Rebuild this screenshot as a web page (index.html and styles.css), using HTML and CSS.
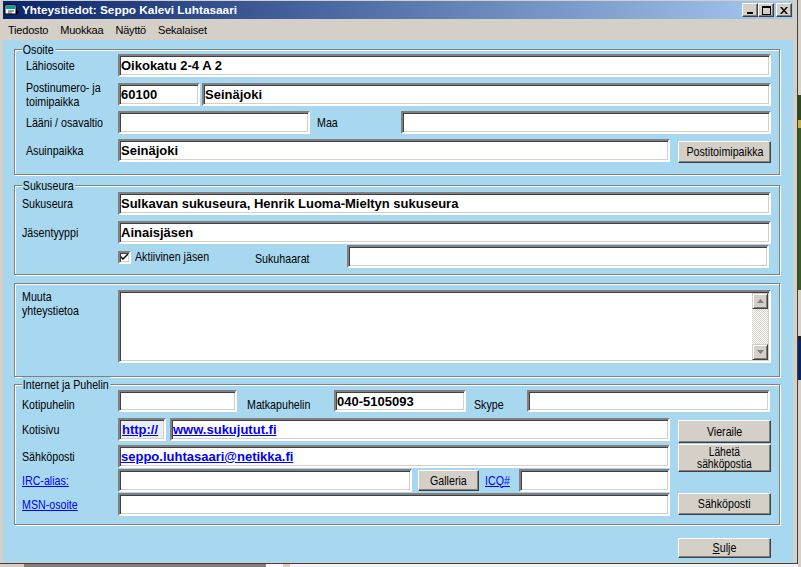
FILE: index.html
```html
<!DOCTYPE html>
<html lang="fi">
<head>
<meta charset="utf-8">
<title>Yhteystiedot</title>
<link rel="stylesheet" href="styles.css">
</head>
<body>
<div class="window">
  <div class="titlebar">
    <svg class="appicon" width="16" height="14" viewBox="0 0 16 14">
      <rect x="1" y="2" width="11" height="9" fill="#fff" stroke="#000" stroke-width="1"/>
      <rect x="2" y="3" width="9" height="3" fill="#00a0a0"/>
      <path d="M4 8h6M4 10h4" stroke="#404040" stroke-width="1"/>
      <path d="M12 6l3 3-3 3z" fill="#000"/>
    </svg>
    <span class="title">Yhteystiedot: Seppo Kalevi Luhtasaari</span>
    <div class="capbtns">
      <span class="cbtn"><svg width="8" height="7" viewBox="0 0 8 7"><rect x="1" y="5" width="6" height="2" fill="#000"/></svg></span>
      <span class="cbtn"><svg width="9" height="9" viewBox="0 0 9 9"><path d="M0 0h9v9H0z M1 2v6h7V2z" fill="#000" fill-rule="evenodd"/></svg></span>
      <span class="cbtn close"><svg width="8" height="7" viewBox="0 0 8 7"><path d="M0 0h2l2 2.5L6 0h2L5 3.5 8 7H6L4 4.5 2 7H0l3-3.5z" fill="#000"/></svg></span>
    </div>
  </div>
  <div class="menubar">
    <span class="menu">Tiedosto</span>
    <span class="menu">Muokkaa</span>
    <span class="menu">Näyttö</span>
    <span class="menu">Sekalaiset</span>
  </div>
  <div class="client">
    <div class="group g-osoite">
      <span class="legend">Osoite</span>
      <div class="row">
        <span class="lbl ind"><span class="nt">Lähiosoite</span></span>
        <div class="fld w653">Oikokatu 2-4 A 2</div>
      </div>
      <div class="row mt6">
        <span class="lbl ind"><span class="nt">Postinumero- ja<br>toimipaikka</span></span>
        <div class="fld w82">60100</div>
        <div class="fld w569 ml2">Seinäjoki</div>
      </div>
      <div class="row mt5">
        <span class="lbl ind"><span class="nt">Lääni / osavaltio</span></span>
        <div class="fld w192"></div>
        <span class="lbl2 maa"><span class="nt">Maa</span></span>
        <div class="fld w370"></div>
      </div>
      <div class="row mt5">
        <span class="lbl ind"><span class="nt">Asuinpaikka</span></span>
        <div class="fld w552">Seinäjoki</div>
        <span class="btn side h22 nudge2"><span class="nt">Postitoimipaikka</span></span>
      </div>
    </div>

    <div class="group g-suku">
      <span class="legend">Sukuseura</span>
      <div class="row">
        <span class="lbl"><span class="nt">Sukuseura</span></span>
        <div class="fld w653">Sulkavan sukuseura, Henrik Luoma-Mieltyn sukuseura</div>
      </div>
      <div class="row mt6">
        <span class="lbl"><span class="nt">Jäsentyyppi</span></span>
        <div class="fld w653">Ainaisjäsen</div>
      </div>
      <div class="row mt1">
        <span class="lbl"></span>
        <span class="chkwrap">
          <span class="chk"><svg width="7" height="7" viewBox="0 0 7 7"><path d="M0 2l2 2 5-5v2L2 6 0 4z" fill="#000"/></svg></span>
          <span class="chklbl"><span class="nt">Aktiivinen jäsen</span></span>
        </span>
        <span class="lbl2 sukuhaarat"><span class="nt">Sukuhaarat</span></span>
        <div class="fld w422"></div>
      </div>
    </div>

    <div class="group g-muuta">
      <div class="row top">
        <span class="lbl"><span class="nt">Muuta<br>yhteystietoa</span></span>
        <div class="memo">
          <div class="memo-text"></div>
          <div class="vscroll">
            <span class="sbtn"><svg width="7" height="4" viewBox="0 0 7 4"><path d="M3.5 0L7 4H0z" fill="#808080"/></svg></span>
            <span class="track"></span>
            <span class="sbtn"><svg width="7" height="4" viewBox="0 0 7 4"><path d="M0 0h7L3.5 4z" fill="#808080"/></svg></span>
          </div>
        </div>
      </div>
    </div>

    <div class="group g-inet">
      <span class="legend">Internet ja Puhelin</span>
      <div class="row h22">
        <span class="lbl low"><span class="nt">Kotipuhelin</span></span>
        <div class="fld h22 w119"></div>
        <span class="lbl2 low matka"><span class="nt">Matkapuhelin</span></span>
        <div class="fld h22 w132">040-5105093</div>
        <span class="lbl2 low skype"><span class="nt">Skype</span></span>
        <div class="fld h22 w243"></div>
      </div>
      <div class="inet-body">
        <div class="inet-left">
          <div class="row">
            <span class="lbl"><span class="nt">Kotisivu</span></span>
            <div class="fld proto w48"><a class="lnk" href="#">http://</a></div>
            <div class="fld w500 ml4"><a class="lnk" href="#">www.sukujutut.fi</a></div>
          </div>
          <div class="row mt4">
            <span class="lbl"><span class="nt">Sähköposti</span></span>
            <div class="fld w552"><a class="lnk" href="#">seppo.luhtasaari@netikka.fi</a></div>
          </div>
          <div class="row mt1">
            <a class="lbl lbl-link" href="#"><span class="nt">IRC-alias:</span></a>
            <div class="fld w294"></div>
            <span class="btn galleria"><span class="nt">Galleria</span></span>
            <a class="icq lbl-link" href="#"><span class="nt">ICQ#</span></a>
            <div class="fld w151"></div>
          </div>
          <div class="row mt1">
            <a class="lbl lbl-link" href="#"><span class="nt">MSN-osoite</span></a>
            <div class="fld w552"></div>
          </div>
        </div>
        <div class="inet-right">
          <span class="btn vieraile"><span class="nt">Vieraile</span></span>
          <span class="btn laheta"><span class="nt">Lähetä<br>sähköpostia</span></span>
          <span class="btn sposti"><span class="nt">Sähköposti</span></span>
        </div>
      </div>
    </div>

    <div class="footer">
      <span class="btn sulje"><span class="nt"><u>S</u>ulje</span></span>
    </div>
  </div>
</div>
<div class="desk-right"></div>
<div class="desk-bottom">
  <span class="db1"></span><span class="db2"></span><span class="db3"></span><span class="db4"></span>
</div>
</body>
</html>
```

FILE: styles.css
```css
* { box-sizing: border-box; }

body {
  margin: 0;
  width: 801px;
  height: 567px;
  overflow: hidden;
  background: #d4d0c8;
  font-family: "Liberation Sans", Arial, sans-serif;
  display: grid;
  grid-template-columns: 798px 3px;
  grid-template-rows: 564px 3px;
}

.window {
  grid-column: 1;
  grid-row: 1;
  background: #d4d0c8;
  border-right: 1px solid #404040;
  border-bottom: 1px solid #404040;
  padding: 1px 4px 1px 3px;
  display: flex;
  flex-direction: column;
}

/* title bar */
.titlebar {
  height: 18px;
  flex: none;
  background: linear-gradient(to right, #0a246a, #a6caf0);
  display: flex;
  align-items: center;
  padding: 0 1px 0 1px;
  color: #fff;
}
.appicon { flex: none; margin-right: 2px; }
.title {
  font-weight: bold;
  font-size: 11.8px;
  white-space: nowrap;
  flex: 1;
}
.capbtns { display: flex; align-items: center; }
.cbtn {
  width: 16px;
  height: 14px;
  background: #d4d0c8;
  border: 1px solid;
  border-color: #fff #404040 #404040 #fff;
  box-shadow: inset -1px -1px #808080;
  display: flex;
  align-items: center;
  justify-content: center;
}
.cbtn.close { margin-left: 2px; }

/* menu */
.menubar {
  height: 21px;
  flex: none;
  display: flex;
  align-items: center;
  font-size: 11px;
  letter-spacing: -0.2px;
  color: #000;
}
.menu { padding: 0 6px; }
.menu:first-child { padding-left: 5px; }

/* client */
.client {
  flex: 1;
  background: #a8d8f0;
  padding-top: 9px;
  display: flex;
  flex-direction: column;
}

.group {
  position: relative;
  margin: 0 13px 0 11px;
  border: 1px solid #808080;
  box-shadow: inset 1px 1px #fff, 1px 1px #fff;
  padding: 0 8px 0 7px;
}
.legend, .lbl, .lbl2, .chklbl, .icq, .btn {
  font-family: "Liberation Sans", Arial, sans-serif;
  font-size: 13px;
  line-height: 14px;
  color: #000;
  white-space: nowrap;
}
/* condensed (Arial Narrow-like) UI text */
.nt {
  display: inline-block;
  transform: scaleX(0.82);
  transform-origin: 0 50%;
}
.btn .nt { transform-origin: 50% 50%; text-align: center; }

.legend {
  position: absolute;
  left: 7px;
  top: -8px;
  padding: 0 2px 0 1px;
  background: #a8d8f0;
  line-height: 15px;
  transform: scaleX(0.82);
  transform-origin: 0 50%;
}
.g-osoite { padding-top: 4px; padding-bottom: 12px; }
.g-suku { margin-top: 10px; padding-top: 6px; padding-bottom: 6px; }
.g-muuta { margin-top: 8px; padding-top: 6px; padding-bottom: 13px; }
.g-inet { margin-top: 7px; padding-top: 5px; padding-bottom: 8px; }

.row { display: flex; align-items: center; height: 23px; }
.row.top { align-items: flex-start; height: auto; }
.row.h22 { height: 22px; }
.mt1 { margin-top: 1px; }
.mt4 { margin-top: 4px; }
.mt5 { margin-top: 5px; }
.mt6 { margin-top: 6px; }
.ml2 { margin-left: 2px; }
.ml4 { margin-left: 4px; }

.lbl { width: 96px; flex: none; }
.lbl.ind { padding-left: 4px; }
.lbl.low, .lbl2.low { padding-top: 8px; }
.lbl-link { color: #0000ff; text-decoration: none; }
.lbl-link .nt { text-decoration: underline; }
.lbl2 { flex: none; }
.maa { margin-left: 7px; width: 84px; }
.sukuhaarat { width: 92px; padding-top: 4px; }
.matka { margin-left: 10px; width: 87px; }
.skype { margin-left: 8px; width: 53px; }

/* sunken field */
.fld {
  flex: none;
  height: 23px;
  background: #fff;
  border: 2px solid;
  border-color: #808080 #fff #fff #808080;
  box-shadow: inset 1px 1px #404040, inset -1px -1px #d4d0c8;
  padding: 0 2px 0 1px;
  display: flex;
  align-items: center;
  font-weight: bold;
  font-size: 13px;
  color: #000;
  white-space: nowrap;
  overflow: hidden;
}
.fld.h22 { height: 22px; }
.fld.proto { background: #e8eef4; padding-left: 2px; }
.w48 { width: 48px; }
.w82 { width: 82px; }
.w119 { width: 119px; }
.w132 { width: 132px; }
.w151 { width: 151px; }
.w192 { width: 192px; }
.w243 { width: 243px; }
.w294 { width: 294px; }
.w370 { width: 370px; }
.w422 { width: 422px; }
.w500 { width: 500px; }
.w552 { width: 552px; }
.w569 { width: 569px; }
.w653 { width: 653px; }

.lnk { color: #0000ff; text-decoration: underline; font-weight: bold; }

/* raised button */
.btn {
  flex: none;
  background: #d4d0c8;
  border: 1px solid;
  border-color: #fff #404040 #404040 #fff;
  box-shadow: inset -1px -1px #808080;
  display: flex;
  align-items: center;
  justify-content: center;
  text-align: center;
}
.side { margin-left: 8px; width: 93px; }
.h22 { height: 22px; }
.nudge2 { align-self: flex-end; margin-bottom: -1px; }

/* checkbox */
.chkwrap { display: flex; align-items: center; width: 137px; flex: none; }
.chk {
  width: 13px;
  height: 13px;
  flex: none;
  background: #fff;
  border: 2px solid;
  border-color: #808080 #fff #fff #808080;
  box-shadow: inset 1px 1px #404040, inset -1px -1px #d4d0c8;
  display: flex;
  align-items: center;
  justify-content: center;
  margin-top: 1px;
}
.chklbl { margin-left: 4px; }

/* memo */
.memo {
  width: 653px;
  height: 73px;
  flex: none;
  background: #fff;
  border: 2px solid;
  border-color: #808080 #fff #fff #808080;
  box-shadow: inset 1px 1px #404040, inset -1px -1px #d4d0c8;
  display: flex;
  padding: 1px;
}
.memo-text { flex: 1; }
.vscroll { width: 16px; display: flex; flex-direction: column; }
.sbtn {
  height: 16px;
  flex: none;
  background: #d4d0c8;
  border: 1px solid;
  border-color: #d4d0c8 #404040 #404040 #d4d0c8;
  box-shadow: inset 1px 1px #fff, inset -1px -1px #808080;
  display: flex;
  align-items: center;
  justify-content: center;
}
.track {
  flex: 1;
  background: repeating-conic-gradient(#d4d0c8 0 25%, #fff 0 50%) 0 0 / 2px 2px;
}

/* internet */
.inet-body { display: flex; margin-top: 6px; }
.inet-left { width: 648px; flex: none; }
.inet-right { margin-left: 8px; width: 93px; display: flex; flex-direction: column; }
.inet-right .btn { width: 93px; }
.vieraile { margin-top: 2px; height: 23px; }
.laheta { margin-top: 1px; height: 28px; line-height: 14px; }
.laheta .nt { font-size: 12.5px; line-height: 12.5px; }
.sposti { margin-top: 21px; height: 22px; }
.galleria { margin-left: 6px; width: 61px; height: 21px; }
.icq { margin-left: 6px; width: 34px; flex: none; }

.footer { display: flex; justify-content: flex-end; padding-right: 22px; margin-top: 13px; }
.sulje { width: 93px; height: 20px; }
.sulje u { text-decoration: underline; }

/* desktop behind */
.desk-right {
  grid-column: 2;
  grid-row: 1 / 3;
  background: linear-gradient(to bottom,
    #d4d0c8 0 95px, #2c4a1c 95px 120px, #c8b040 120px 128px, #3a5a24 128px 290px,
    #d4d0c8 290px 336px, #202020 336px 340px, #0a246a 340px 380px, #d4d0c8 380px);
}
.desk-bottom {
  grid-column: 1;
  grid-row: 2;
  display: flex;
  background: #eef4f8;
}
.db1 { width: 24px; background: #d4d0c8; }
.db2 { width: 242px; background: #808080; }
.db3 { width: 17px; background: #fff; }
.db4 { width: 7px; background: #d4d0c8; }
```
